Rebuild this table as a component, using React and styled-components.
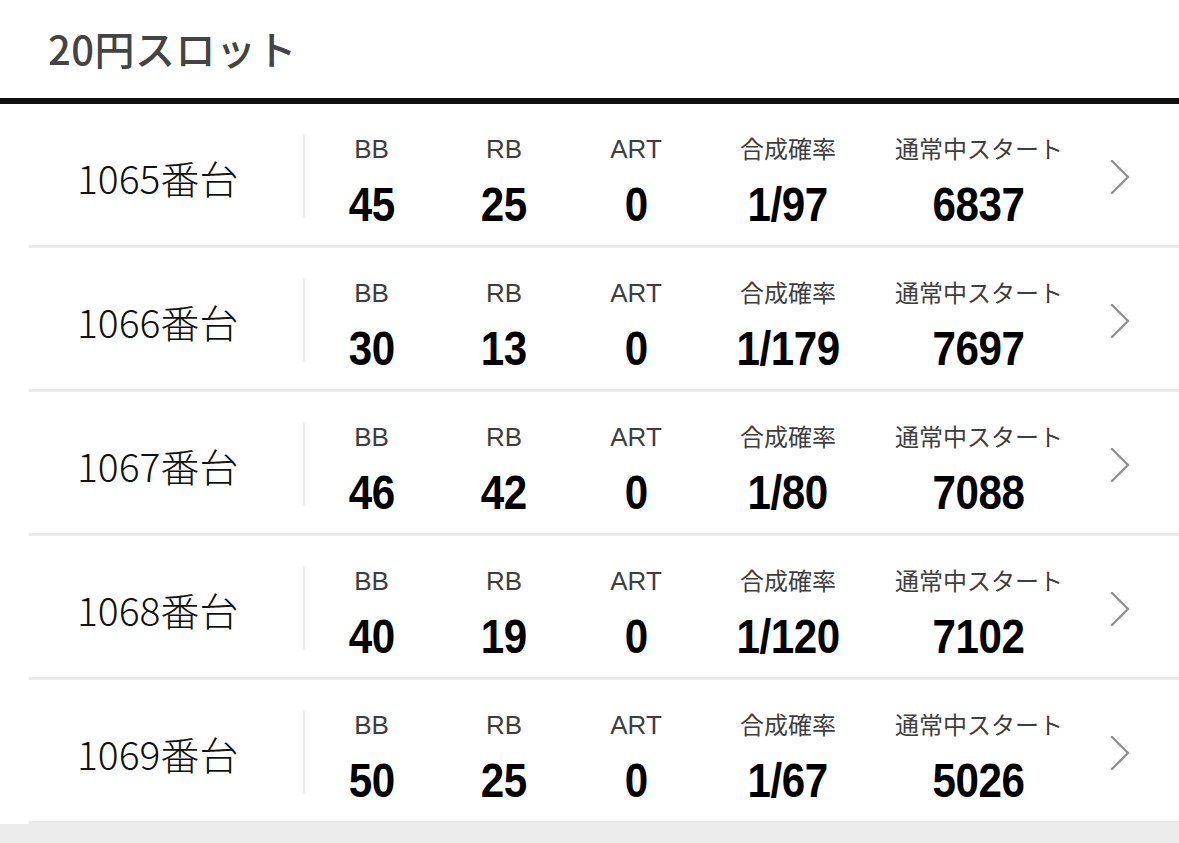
import React from 'react'
import styled, { createGlobalStyle } from 'styled-components'

const rows = [
  { name: '1065番台', bb: 45, rb: 25, art: 0, rate: '1/97', start: 6837 },
  { name: '1066番台', bb: 30, rb: 13, art: 0, rate: '1/179', start: 7697 },
  { name: '1067番台', bb: 46, rb: 42, art: 0, rate: '1/80', start: 7088 },
  { name: '1068番台', bb: 40, rb: 19, art: 0, rate: '1/120', start: 7102 },
  { name: '1069番台', bb: 50, rb: 25, art: 0, rate: '1/67', start: 5026 },
]

const columns = [
  { key: 'bb', label: 'BB', width: 133 },
  { key: 'rb', label: 'RB', width: 132 },
  { key: 'art', label: 'ART', width: 132 },
  { key: 'rate', label: '合成確率', width: 172 },
  { key: 'start', label: '通常中スタート', width: 210 },
]

const GlobalStyle = createGlobalStyle`
  html, body {
    margin: 0;
    padding: 0;
    background: #ebebeb;
  }
  body {
    font-family: "Liberation Sans", "Noto Sans CJK JP", sans-serif;
  }
`

function Chevron() {
  return (
    <svg width="22" height="38" viewBox="0 0 22 38" fill="none">
      <path d="M3 3 L19 19 L3 35" stroke="#8f8f8f" strokeWidth="2.4" strokeLinecap="round" strokeLinejoin="round" />
    </svg>
  )
}

function App() {
  return (
    <Page>
      <GlobalStyle />
      <Header>
        <h1>20円スロット</h1>
      </Header>
      <List>
        {rows.map((row) => (
          <Row key={row.name}>
            <Name>{row.name}</Name>
            <Divider />
            <Stats>
              {columns.map((col) => (
                <Stat key={col.key} $w={col.width}>
                  <Label $latin={/^[A-Z]+$/.test(col.label)}>{col.label}</Label>
                  <Value>{row[col.key]}</Value>
                </Stat>
              ))}
            </Stats>
            <Arrow>
              <Chevron />
            </Arrow>
          </Row>
        ))}
      </List>
    </Page>
  )
}

const Page = styled.div`
  background: #ffffff;
  width: 100%;
`

const Header = styled.header`
  height: 98px;
  border-bottom: 6px solid #111111;
  display: flex;
  align-items: center;
  padding-left: 48px;
  h1 {
    margin: 0 0 2px;
    font-family: "Noto Sans CJK JP", sans-serif;
    font-size: 40px;
    font-weight: 500;
    color: #444444;
    letter-spacing: 0.5px;
  }
`

const List = styled.ul`
  list-style: none;
  margin: 0;
  padding: 0;
`

const Row = styled.li`
  margin-left: 29px;
  height: 144px;
  box-sizing: border-box;
  padding-top: 31px;
  border-bottom: 3px solid #eaeaea;
  display: flex;
  align-items: flex-start;
`

const Name = styled.div`
  width: 274px;
  height: 83px;
  box-sizing: border-box;
  padding: 0 0 0 48px;
  display: flex;
  align-items: center;
  font-family: "Noto Sans CJK JP", sans-serif;
  font-size: 39px;
  font-weight: 300;
  color: #111111;
`

const Divider = styled.div`
  width: 2px;
  height: 83px;
  background: #eeeeee;
`

const Stats = styled.div`
  display: flex;
`

const Stat = styled.div`
  width: ${(p) => p.$w}px;
  display: flex;
  flex-direction: column;
  align-items: center;
`

const Label = styled.span`
  font-family: "Liberation Sans", "Noto Sans CJK JP", sans-serif;
  font-size: ${(p) => (p.$latin ? 26 : 24)}px;
  line-height: 29px;
  color: #3e3e3e;
  white-space: nowrap;
`

const Value = styled.span`
  display: inline-block;
  margin-top: 16px;
  font-family: "Liberation Sans", sans-serif;
  font-weight: 700;
  font-size: 49px;
  line-height: 48px;
  color: #000000;
  transform: scaleX(0.86);
  letter-spacing: -0.5px;
`

const Arrow = styled.div`
  flex: 1;
  height: 83px;
  display: flex;
  align-items: center;
  padding-left: 25px;
`

export default App
